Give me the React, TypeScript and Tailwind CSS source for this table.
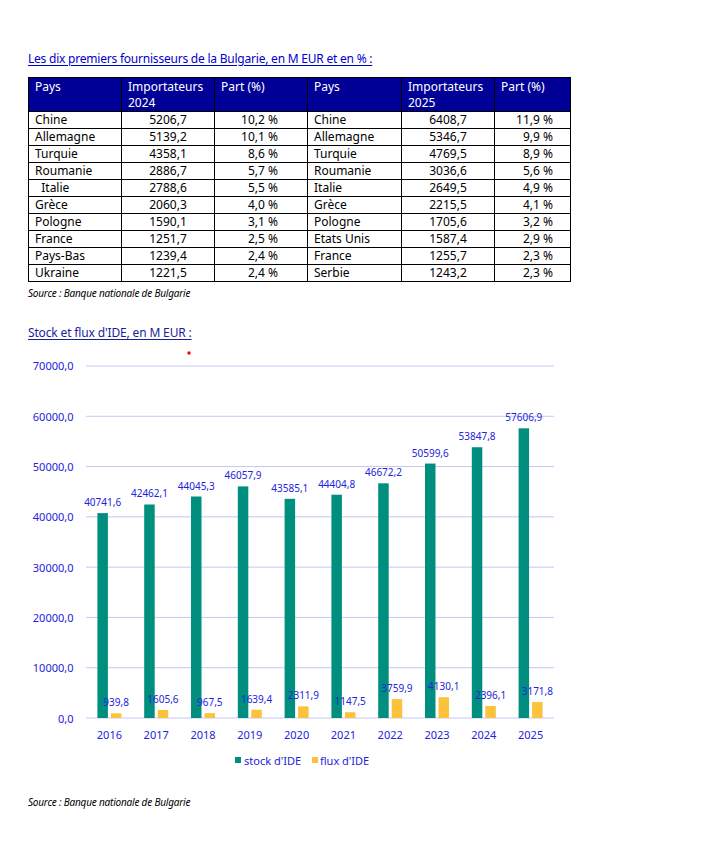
import React from "react";

const FONT = '"Noto Sans", "Open Sans", Arial, sans-serif';

const rows2024 = [
  ["Chine", "5206,7", "10,2 %"],
  ["Allemagne", "5139,2", "10,1 %"],
  ["Turquie", "4358,1", "8,6 %"],
  ["Roumanie", "2886,7", "5,7 %"],
  ["\u00a0\u00a0Italie", "2788,6", "5,5 %"],
  ["Grèce", "2060,3", "4,0 %"],
  ["Pologne", "1590,1", "3,1 %"],
  ["France", "1251,7", "2,5 %"],
  ["Pays-Bas", "1239,4", "2,4 %"],
  ["Ukraine", "1221,5", "2,4 %"],
];

const rows2025 = [
  ["Chine", "6408,7", "11,9 %"],
  ["Allemagne", "5346,7", "9,9 %"],
  ["Turquie", "4769,5", "8,9 %"],
  ["Roumanie", "3036,6", "5,6 %"],
  ["Italie", "2649,5", "4,9 %"],
  ["Grèce", "2215,5", "4,1 %"],
  ["Pologne", "1705,6", "3,2 %"],
  ["Etats Unis", "1587,4", "2,9 %"],
  ["France", "1255,7", "2,3 %"],
  ["Serbie", "1243,2", "2,3 %"],
];

// stock / flux d'IDE
const ide = [
  { year: "2016", stock: 40741.6, flux: 939.8 },
  { year: "2017", stock: 42462.1, flux: 1605.6 },
  { year: "2018", stock: 44045.3, flux: 967.5 },
  { year: "2019", stock: 46057.9, flux: 1639.4 },
  { year: "2020", stock: 43585.1, flux: 2311.9 },
  { year: "2021", stock: 44404.8, flux: 1147.5 },
  { year: "2022", stock: 46672.2, flux: 3759.9 },
  { year: "2023", stock: 50599.6, flux: 4130.1 },
  { year: "2024", stock: 53847.8, flux: 2396.1 },
  { year: "2025", stock: 57606.9, flux: 3171.8 },
];

const fmt = (v: number) => v.toFixed(1).replace(".", ",");

function Chart() {
  const base = 377;
  const k = 0.0050286;
  const y = (v: number) => base - v * k;
  const x0 = 58;
  const step = 46.8;
  const blue = "#2323dc";
  const grid = "#c6c6f2";

  return (
    <svg width="560" height="440" className="block" style={{ fontFamily: FONT }}>
      <circle cx="161" cy="12" r="1.7" fill="#ff0000" />
      {[0, 10000, 20000, 30000, 40000, 50000, 60000, 70000].map(v => (
        <g key={v}>
          <line x1={x0} x2={x0 + 468} y1={y(v)} y2={y(v)} stroke={grid} strokeWidth="1" />
          <text x="45.5" y={y(v)} fontSize="11" fill={blue} textAnchor="end" dominantBaseline="central">
            {fmt(v)}
          </text>
        </g>
      ))}
      {ide.map((d, i) => {
        const cx = x0 + step * (i + 0.5);
        const st = y(d.stock);
        const fl = y(d.flux);
        return (
          <g key={d.year}>
            <rect x={cx - 12} y={st} width="10.5" height={base - st} fill="#008f7e" />
            <rect x={cx + 1.5} y={fl} width="10.5" height={base - fl} fill="#fbc33b" />
            <text x={cx - 6.75} y={st - 11} fontSize="10" fill={blue} textAnchor="middle" dominantBaseline="central">
              {fmt(d.stock)}
            </text>
            <text x={cx + 6.75} y={fl - 11} fontSize="10" fill={blue} textAnchor="middle" dominantBaseline="central">
              {fmt(d.flux)}
            </text>
            <text x={cx} y="393" fontSize="11" fill={blue} textAnchor="middle" dominantBaseline="central">
              {d.year}
            </text>
          </g>
        );
      })}
      <rect x="207" y="416" width="6" height="6" fill="#008f7e" />
      <text x="216" y="419" fontSize="11" fill={blue} dominantBaseline="central">stock d'IDE</text>
      <rect x="284" y="416" width="6" height="6" fill="#fbc33b" />
      <text x="292" y="419" fontSize="11" fill={blue} dominantBaseline="central">flux d'IDE</text>
    </svg>
  );
}

function HalfHead({ year }: { year: string }) {
  return (
    <>
      <th className="border border-black px-[6px] pt-[1px] align-top font-normal text-left">Pays</th>
      <th className="border border-black px-[6px] pt-[1px] align-top font-normal text-left">
        Importateurs<br />{year}
      </th>
      <th className="border border-black px-[6px] pt-[1px] align-top font-normal text-left">Part (%)</th>
    </>
  );
}

export default function App() {
  return (
    <div className="w-[712px] h-[846px] bg-white pl-[28px] pt-[51px] text-black" style={{ fontFamily: FONT }}>
      <p className="text-[12px] leading-[16px] tracking-[-0.22px] text-[#0000cc] underline underline-offset-2">
        Les dix premiers fournisseurs de la Bulgarie, en M EUR et en % :
      </p>

      <table className="mt-[10px] border-collapse text-[12px] leading-[16px] table-fixed w-[542px]">
        <colgroup>
          <col className="w-[93px]" />
          <col className="w-[93px]" />
          <col className="w-[93px]" />
          <col className="w-[94px]" />
          <col className="w-[93px]" />
          <col className="w-[76px]" />
        </colgroup>
        <thead>
          <tr className="bg-[#000096] text-white h-[34px]">
            <HalfHead year="2024" />
            <HalfHead year="2025" />
          </tr>
        </thead>
        <tbody>
          {rows2024.map((r, i) => {
            const s = rows2025[i];
            return (
              <tr key={i} className="h-[17px]">
                <td className="border border-black px-[6px] py-0 whitespace-pre">{r[0]}</td>
                <td className="border border-black py-0 text-center">{r[1]}</td>
                <td className="border border-black py-0 pr-[29px] text-right">{r[2]}</td>
                <td className="border border-black px-[6px] py-0">{s[0]}</td>
                <td className="border border-black py-0 text-center">{s[1]}</td>
                <td className="border border-black py-0 pr-[17px] text-right">{s[2]}</td>
              </tr>
            );
          })}
        </tbody>
      </table>

      <p className="mt-[4px] text-[10px] leading-[14px] tracking-[-0.2px] italic">Source : Banque nationale de Bulgarie</p>

      <p className="mt-[25px] text-[12px] leading-[16px] tracking-[-0.15px] text-[#1c1c9c] underline underline-offset-2">
        Stock et flux d'IDE, en M EUR :
      </p>

      <Chart />

      <p className="mt-[14px] text-[10px] leading-[14px] tracking-[-0.2px] italic">Source : Banque nationale de Bulgarie</p>
    </div>
  );
}
